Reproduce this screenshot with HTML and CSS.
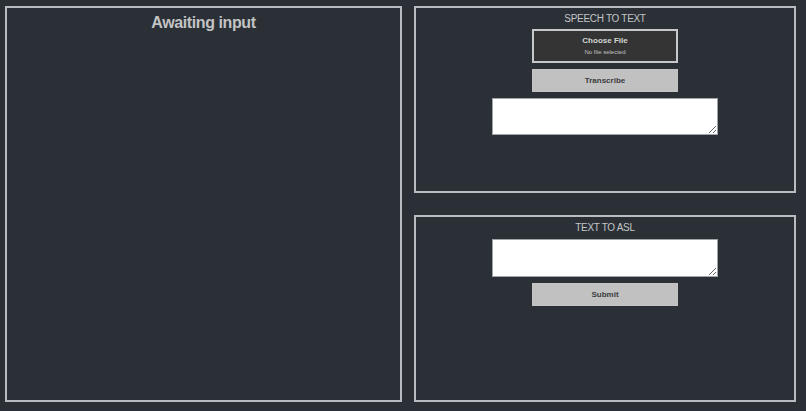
FILE: index.html
```html
<!DOCTYPE html>
<html lang="en">
<head>
<meta charset="utf-8">
<title>ASL Translator</title>
<link rel="stylesheet" href="styles.css">
</head>
<body>
<main class="layout">
  <section class="panel output-panel">
    <h1 class="output-title">Awaiting input</h1>
  </section>
  <div class="side">
    <section class="panel tool-panel">
      <h2 class="tool-title">SPEECH TO TEXT</h2>
      <label class="file-picker">
        <input type="file" class="file-input">
        <span class="file-label">Choose File</span>
        <span class="file-status">No file selected</span>
      </label>
      <button class="action-btn gap-6" type="button">Transcribe</button>
      <textarea class="text-box gap-6"></textarea>
    </section>
    <section class="panel tool-panel">
      <h2 class="tool-title">TEXT TO ASL</h2>
      <textarea class="text-box gap-5 tall"></textarea>
      <button class="action-btn gap-6" type="button">Submit</button>
    </section>
  </div>
</main>
</body>
</html>
```

FILE: styles.css
```css
* { box-sizing: border-box; }

html, body {
  margin: 0;
  height: 100%;
  background: #2a3036;
  font-family: "Liberation Sans", Arial, sans-serif;
}

.layout {
  display: grid;
  grid-template-columns: 397px 382px;
  column-gap: 12px;
  padding: 6px 0 0 5px;
}

.panel {
  border: 2px solid #b9bdc1;
  display: flex;
  flex-direction: column;
  align-items: center;
  padding-top: 5px;
}

.output-panel {
  height: 396px;
}

.output-title {
  margin: 0;
  font-size: 16px;
  line-height: 19px;
  font-weight: bold;
  letter-spacing: -0.4px;
  color: #c2c3c4;
}

.side {
  display: flex;
  flex-direction: column;
  gap: 22px;
}

.tool-panel {
  height: 187px;
}

.tool-title {
  margin: 0;
  font-size: 10px;
  line-height: 12px;
  font-weight: normal;
  letter-spacing: -0.3px;
  color: #c4c6c8;
}

.file-picker {
  margin-top: 4px;
  width: 146px;
  height: 34px;
  border: 2px solid #c6c8ca;
  background: #343434;
  display: flex;
  flex-direction: column;
  align-items: center;
  justify-content: center;
  gap: 2px;
  cursor: pointer;
}

.file-input { display: none; }

.file-label {
  font-size: 8px;
  line-height: 10px;
  font-weight: bold;
  color: #d4d4d4;
}

.file-status {
  font-size: 6px;
  line-height: 8px;
  color: #c0c0c0;
}

.gap-6 { margin-top: 6px; }
.gap-5 { margin-top: 5px; }

.action-btn {
  width: 146px;
  height: 23px;
  border: 1px solid #c4c4c4;
  background: #c1c1c1;
  color: #3c3c3c;
  font-family: "Liberation Sans", Arial, sans-serif;
  font-size: 8px;
  font-weight: bold;
  padding: 0;
}

.text-box {
  display: block;
  width: 226px;
  height: 37px;
  border: 1px solid #a0a4a8;
  background: #ffffff;
  padding: 2px;
  font-family: "Liberation Sans", Arial, sans-serif;
  font-size: 10px;
}

.text-box.tall { height: 38px; }
```
